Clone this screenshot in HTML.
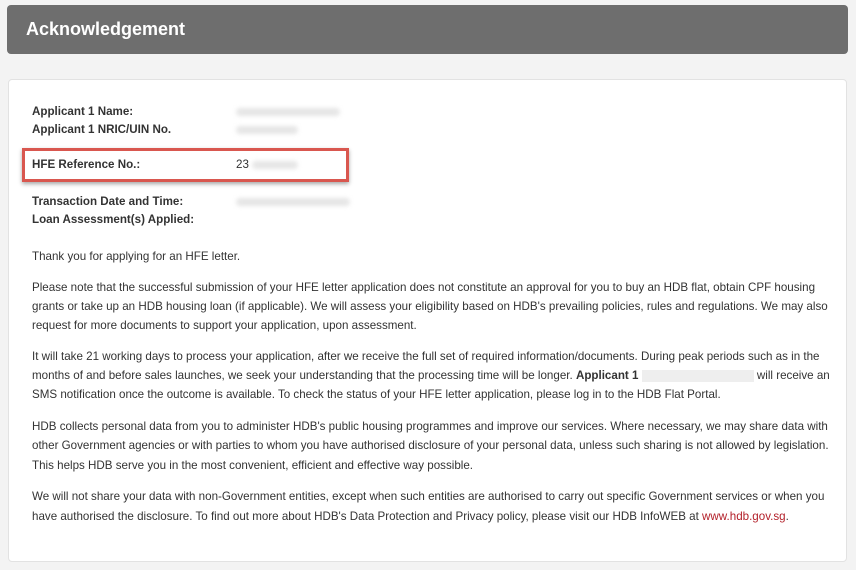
<!DOCTYPE html>
<html><head><style>
body{margin:0;width:856px;height:570px;background:#f3f3f3;font-family:"Liberation Sans",sans-serif;color:#333;position:relative;overflow:hidden}
.hdr{position:absolute;left:7px;top:5px;width:841px;height:49px;background:#6e6e6e;border-radius:4px;color:#fff;font-size:18px;font-weight:bold;line-height:49px;padding-left:19px;box-sizing:border-box}
.card{position:absolute;left:8px;top:79px;width:839px;height:483px;background:#fff;border:1px solid #e2e2e2;border-radius:4px;box-sizing:border-box}
.t{position:absolute;left:32px;font-size:11.6px;white-space:nowrap}
.b{font-weight:bold}
.blur{position:absolute;background:#e6e6e6;height:8px;border-radius:4px;filter:blur(2px)}
.box{position:absolute;left:22px;top:148px;width:327px;height:34px;border:3px solid #d9574f;box-sizing:border-box;box-shadow:0 2px 4px rgba(0,0,0,.35)}
a{color:#b3202a;text-decoration:none}
</style></head><body>
<div class="hdr">Acknowledgement</div>
<div class="card"></div>
<div class="t b" style="top:105px">Applicant 1 Name:</div>
<div class="t b" style="top:123px">Applicant 1 NRIC/UIN No.</div>
<div class="blur" style="left:236px;top:108px;width:104px"></div>
<div class="blur" style="left:236px;top:126px;width:62px"></div>
<div class="box"></div>
<div class="t b" style="top:158px">HFE Reference No.:</div>
<div class="t" style="left:236px;top:158px">23</div>
<div class="blur" style="left:252px;top:161px;width:46px"></div>
<div class="t b" style="top:195px">Transaction Date and Time:</div>
<div class="t b" style="top:213px">Loan Assessment(s) Applied:</div>
<div class="blur" style="left:236px;top:198px;width:114px"></div>
<div class="t" style="top:250px">Thank you for applying for an HFE letter.</div>
<div class="t" style="top:281px">Please note that the successful submission of your HFE letter application does not constitute an approval for you to buy an HDB flat, obtain CPF housing</div>
<div class="t" style="top:300px">grants or take up an HDB housing loan (if applicable). We will assess your eligibility based on HDB's prevailing policies, rules and regulations. We may also</div>
<div class="t" style="top:319px">request for more documents to support your application, upon assessment.</div>
<div class="t" style="top:350px">It will take 21 working days to process your application, after we receive the full set of required information/documents. During peak periods such as in the</div>
<div class="t" style="top:369px">months of and before sales launches, we seek your understanding that the processing time will be longer. <b>Applicant 1</b> <span style="display:inline-block;width:112px;height:12px;background:#eee;vertical-align:middle"></span> will receive an</div>
<div class="t" style="top:388px">SMS notification once the outcome is available. To check the status of your HFE letter application, please log in to the HDB Flat Portal.</div>
<div class="t" style="top:420px">HDB collects personal data from you to administer HDB's public housing programmes and improve our services. Where necessary, we may share data with</div>
<div class="t" style="top:439px">other Government agencies or with parties to whom you have authorised disclosure of your personal data, unless such sharing is not allowed by legislation.</div>
<div class="t" style="top:459px">This helps HDB serve you in the most convenient, efficient and effective way possible.</div>
<div class="t" style="top:490px">We will not share your data with non-Government entities, except when such entities are authorised to carry out specific Government services or when you</div>
<div class="t" style="top:510px">have authorised the disclosure. To find out more about HDB's Data Protection and Privacy policy, please visit our HDB InfoWEB at <a>www.hdb.gov.sg</a>.</div>
</body></html>
